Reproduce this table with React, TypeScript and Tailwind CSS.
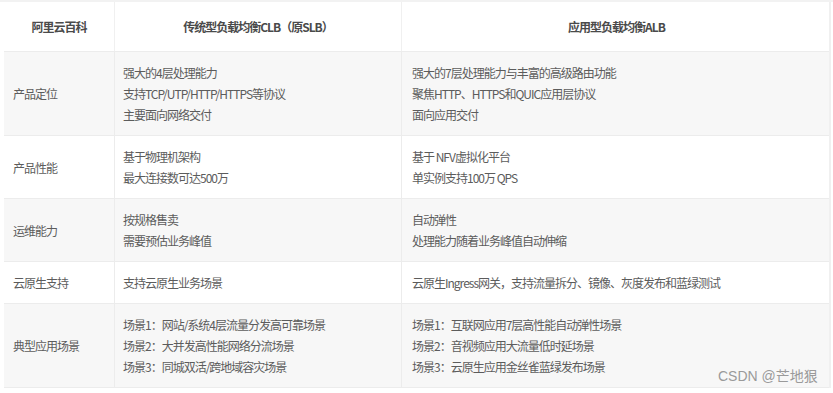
const rows: { label: string; clb: string[]; alb: string[]; bg: string }[] = [
  {
    label: "产品定位",
    clb: ["强大的4层处理能力", "支持TCP/UTP/HTTP/HTTPS等协议", "主要面向网络交付"],
    alb: ["强大的7层处理能力与丰富的高级路由功能", "聚焦HTTP、HTTPS和QUIC应用层协议", "面向应用交付"],
    bg: "bg-[#f7f7f7]",
  },
  {
    label: "产品性能",
    clb: ["基于物理机架构", "最大连接数可达500万"],
    alb: ["基于 NFV虚拟化平台", "单实例支持100万 QPS"],
    bg: "bg-white",
  },
  {
    label: "运维能力",
    clb: ["按规格售卖", "需要预估业务峰值"],
    alb: ["自动弹性", "处理能力随着业务峰值自动伸缩"],
    bg: "bg-[#f7f7f7]",
  },
  {
    label: "云原生支持",
    clb: ["支持云原生业务场景"],
    alb: ["云原生Ingress网关，支持流量拆分、镜像、灰度发布和蓝绿测试"],
    bg: "bg-white",
  },
  {
    label: "典型应用场景",
    clb: ["场景1：网站/系统4层流量分发高可靠场景", "场景2：大并发高性能网络分流场景", "场景3：同城双活/跨地域容灾场景"],
    alb: ["场景1：互联网应用7层高性能自动弹性场景", "场景2：音视频应用大流量低时延场景", "场景3：云原生应用金丝雀蓝绿发布场景"],
    bg: "bg-[#f7f7f7]",
  },
]

function Lines({ items }: { items: string[] }) {
  return (
    <div className="flex flex-col">
      {items.map((t) => (
        <span key={t} className="whitespace-nowrap">{t}</span>
      ))}
    </div>
  )
}

export default function App() {
  return (
    <div className="relative w-[833px] h-[393px] bg-white overflow-hidden font-['Noto_Sans_CJK_SC',sans-serif] text-[12px] leading-[21px] tracking-[-1px] text-[#5c5c5c]">
      {/* top strip */}
      <div className="h-[2px] bg-[#f2f2f2]" />

      <div className="ml-[4px] w-[827px] border-r-2 border-[#f0f0f0]">
        {/* header */}
        <div className="grid grid-cols-[111px_287px_429px] bg-white border-b border-[#ececec] font-bold text-[#4a4a4a]">
          <div className="py-[14px] text-center border-r border-[#f0f0f0]">阿里云百科</div>
          <div className="py-[14px] text-center border-r border-[#f0f0f0]">传统型负载均衡CLB（原SLB）</div>
          <div className="py-[14px] text-center">应用型负载均衡ALB</div>
        </div>

        {/* body */}
        {rows.map((r) => (
          <div key={r.label} className={`grid grid-cols-[111px_287px_429px] border-b border-[#ececec] ${r.bg}`}>
            <div className="flex items-center px-[9px] py-[10px] border-r border-[#ececec]">{r.label}</div>
            <div className="px-[8px] py-[10px] border-r border-[#ececec]">
              <Lines items={r.clb} />
            </div>
            <div className="px-[10px] py-[10px]">
              <Lines items={r.alb} />
            </div>
          </div>
        ))}
      </div>

      {/* watermark */}
      <div className="absolute left-[718px] top-[366px] text-[14px] tracking-normal text-[#9a9a9a] font-['Liberation_Sans','Noto_Sans_CJK_SC',sans-serif]">
        CSDN @芒地狠
      </div>
    </div>
  )
}
